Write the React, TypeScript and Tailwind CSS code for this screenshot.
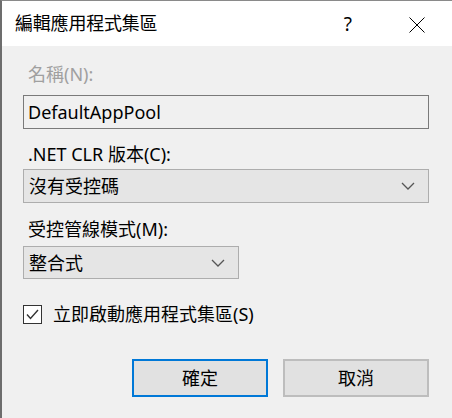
import React from "react";

const font = {
  fontFamily: '"Segoe UI", "Noto Sans", "Noto Sans CJK TC", sans-serif',
};

function Chevron() {
  return (
    <svg width="14" height="8" viewBox="0 0 14 8" className="shrink-0">
      <path d="M1 1 L7 7 L13 1" fill="none" stroke="#555" strokeWidth="1.3" />
    </svg>
  );
}

function Select({ value, className }: { value: string; className: string }) {
  return (
    <div
      className={`flex items-center justify-between border border-[#adadad] bg-[#e5e5e5] pl-[5px] pr-[13px] ${className}`}
    >
      <span className="text-[18px] leading-none text-black">{value}</span>
      <Chevron />
    </div>
  );
}

export default function App() {
  return (
    <div
      className="w-[452px] h-[418px] bg-[#f0f0f0] border-l-2 border-l-[#6d6d6d] border-t border-t-[#8a8a8a] overflow-hidden"
      style={font}
    >
      {/* title bar */}
      <div className="h-[45px] bg-white flex items-center pl-[13px] pr-[27px]">
        <span className="text-[18px] text-black tracking-[-0.2px]">編輯應用程式集區</span>
        <span className="ml-auto text-[19px] text-black mr-[57px] mt-[2px]">?</span>
        <svg width="16" height="16" viewBox="0 0 16 16" className="mt-[2px]">
          <path d="M0.5 0.5 L15.5 15.5 M15.5 0.5 L0.5 15.5" stroke="#000" strokeWidth="1" />
        </svg>
      </div>

      <div className="pl-[21px] pr-[23px] flex flex-col">
        <div className="mt-[16px] pl-[5px] text-[18px] leading-[24px] text-[#a0a0a0]">名稱(N):</div>
        <div className="mt-[9px] h-[34px] border border-[#7a7a7a] flex items-center pl-[4px] text-[18px] text-black">
          DefaultAppPool
        </div>

        <div className="mt-[13px] pl-[5px] text-[18px] leading-[24px] text-black">.NET CLR 版本(C):</div>
        <Select value="沒有受控碼" className="mt-[3px] h-[34px]" />

        <div className="mt-[14px] pl-[5px] text-[18px] leading-[24px] text-black">受控管線模式(M):</div>
        <Select value="整合式" className="mt-[5px] h-[33px] w-[216px]" />

        <div className="mt-[23px] flex items-center h-[24px]">
          <div className="w-[19px] h-[19px] border border-[#333] bg-white flex items-center justify-center">
            <svg width="13" height="11" viewBox="0 0 13 11">
              <path d="M1 5.5 L4.5 9.5 L12 1" fill="none" stroke="#333" strokeWidth="1.4" />
            </svg>
          </div>
          <span className="ml-[11px] text-[18px] leading-none text-black">立即啟動應用程式集區(S)</span>
        </div>

        <div className="mt-[33px] flex justify-end gap-[15px]">
          <button className="w-[136px] h-[38px] border-2 border-[#0078d7] bg-[#e1e1e1] text-[18px] text-black">
            確定
          </button>
          <button className="w-[146px] h-[38px] border-2 border-[#bdbdbd] bg-[#e1e1e1] text-[18px] text-black">
            取消
          </button>
        </div>
      </div>
    </div>
  );
}
